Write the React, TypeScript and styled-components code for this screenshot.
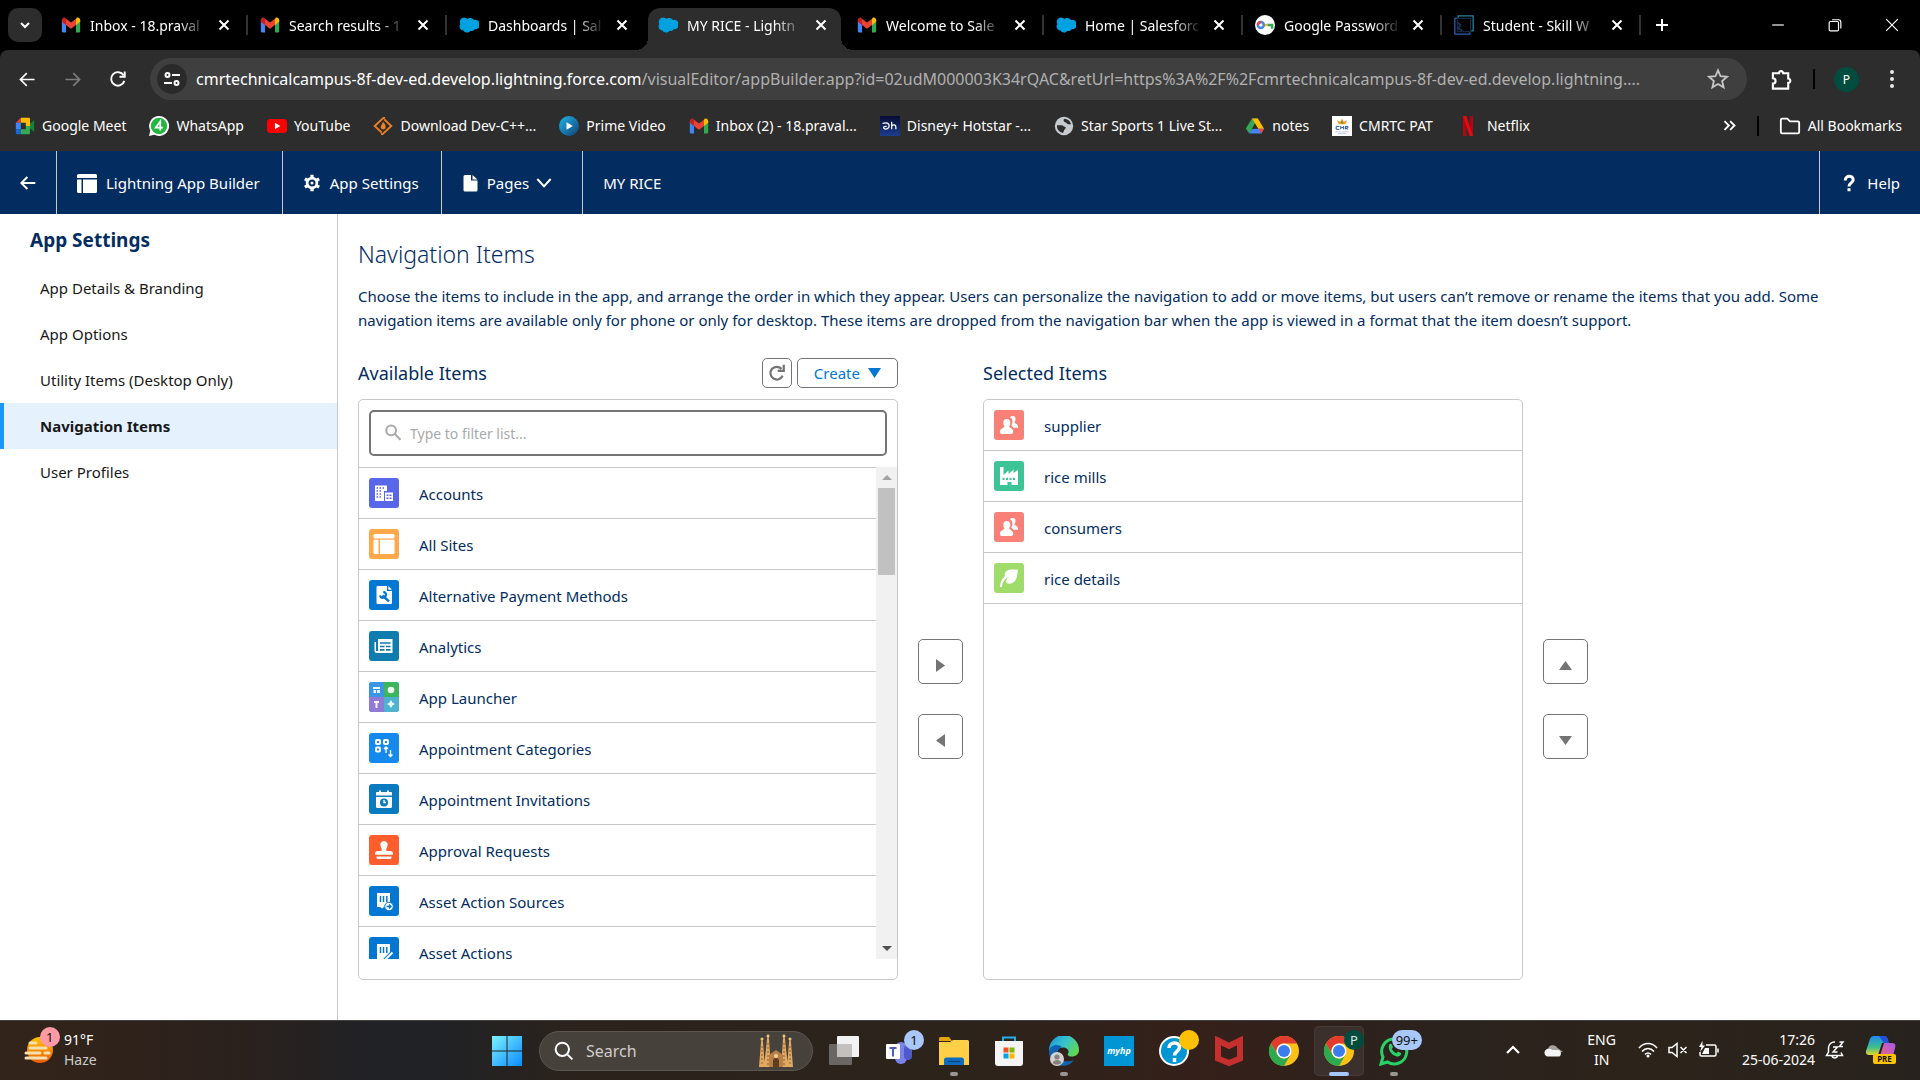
import React from "react";
import styled, { createGlobalStyle, css } from "styled-components";

const FONT = '"Noto Sans", "Open Sans", sans-serif';

const GlobalStyle = createGlobalStyle`
  *, *::before, *::after { box-sizing: border-box; }
  html, body { margin: 0; padding: 0; background: #fff; }
  body { font-family: ${FONT}; font-size: 15px; overflow: hidden; }
  button, input { font: inherit; color: inherit; }
  button { border: 0; padding: 0; background: none; cursor: pointer; }
  a { color: inherit; text-decoration: none; }
  h1, h2, p, ul { margin: 0; padding: 0; font-weight: 400; }
  ul { list-style: none; }
  svg { display: block; flex: none; }
`;

/* ---------- Shell ---------- */

const Shell = styled.div`
  display: flex;
  flex-direction: column;
  height: 100vh;
`;

/* ---------- Browser chrome ---------- */

const TabStrip = styled.div`
  display: flex;
  align-items: stretch;
  height: 50px;
  padding-left: 8px;
  background: #000;
  color: #fff;
  font-size: 14px;
`;

const TabSearch = styled.button`
  display: grid;
  place-items: center;
  flex: none;
  align-self: center;
  width: 34px;
  height: 34px;
  margin-right: 7px;
  border-radius: 10px;
  background: #2d2d2d;
`;

const Tab = styled.div<{ $active?: boolean; $divider?: boolean }>`
  position: relative;
  display: flex;
  align-items: center;
  flex: 0 1 199px;
  min-width: 0;
  padding: 0 18px 0 12px;

  > * { position: relative; }

  ${(p) =>
    p.$divider &&
    css`
      &::after {
        content: "";
        position: absolute;
        right: 0;
        top: 15px;
        width: 2px;
        height: 20px;
        background: #333;
      }
    `}

  ${(p) =>
    p.$active &&
    css`
      &::before {
        content: "";
        position: absolute;
        inset: 8px 4px 0 2px;
        border-radius: 12px 12px 0 0;
        background: #2d2d2d;
      }
      &::after {
        content: "";
        position: absolute;
        bottom: 0;
        left: -10px;
        right: -8px;
        height: 12px;
        background:
          radial-gradient(circle at 0 0, transparent 12px, #2d2d2d 12px) left / 12px 12px no-repeat,
          radial-gradient(circle at 100% 0, transparent 12px, #2d2d2d 12px) right / 12px 12px no-repeat;
      }
    `}
`;

const TabTitle = styled.span`
  flex: 1;
  min-width: 0;
  margin: 0 6px 0 9px;
  overflow: hidden;
  white-space: nowrap;
  mask-image: linear-gradient(90deg, #000 72%, transparent 96%);
`;

const ChromeButton = styled.button<{ $w?: number }>`
  display: grid;
  place-items: center;
  flex: none;
  width: ${(p) => p.$w ?? 45}px;
  height: 100%;
  color: #fff;
`;

const WindowControls = styled.div`
  display: flex;
  margin-left: auto;
`;

const ChromeBody = styled.div`
  background: #000;
  color: #e8e8e8;
`;

const Toolbar = styled.div`
  display: flex;
  align-items: center;
  height: 58px;
  padding: 0 6px 0 5px;
  border-radius: 8px 8px 0 0;
  background: #2d2d2d;
`;

const Omnibox = styled.div`
  display: flex;
  align-items: center;
  flex: 1;
  min-width: 0;
  height: 42px;
  margin: 0 12px 0 10px;
  padding: 0 18px 0 7px;
  border-radius: 21px;
  background: #3f3f3f;
  color: #c7c7c7;
`;

const SiteInfo = styled.button`
  display: grid;
  place-items: center;
  flex: none;
  width: 30px;
  height: 30px;
  border-radius: 50%;
  background: #2a2a2a;
`;

const Url = styled.div`
  flex: 1;
  min-width: 0;
  padding: 0 9px;
  overflow: hidden;
  white-space: nowrap;
  font-size: 16px;
  color: #b0b0b0;

  b { font-weight: 400; color: #fff; }
`;

const VRule = styled.span<{ $m: string }>`
  flex: none;
  width: 2px;
  height: 20px;
  margin: ${(p) => p.$m};
  background: #000;
`;

const Avatar = styled.span`
  display: grid;
  place-items: center;
  width: 25px;
  height: 25px;
  border-radius: 50%;
  background: #004d40;
  color: #fff;
  font-size: 12px;
`;

const BookmarkBar = styled.nav`
  display: flex;
  align-items: center;
  height: 43px;
  padding: 0 18px 8px 15px;
  background: #2d2d2d;
  color: #fff;
  font-size: 14px;
`;

const BookmarkList = styled.div`
  display: flex;
  align-items: center;
  flex: 1;
  gap: 23px;
  min-width: 0;
`;

const Bookmark = styled.a`
  display: flex;
  align-items: center;
  gap: 7px;
  white-space: nowrap;
`;

/* ---------- App header ---------- */

const AppHeader = styled.header`
  display: flex;
  flex: none;
  height: 63px;
  background: #032d60;
  color: #fff;
`;

const HeaderItem = styled.button<{ $pr?: number; $gap?: number; $side?: "left" | "right" | "none" }>`
  display: flex;
  align-items: center;
  gap: ${(p) => p.$gap ?? 9}px;
  padding: 0 ${(p) => p.$pr ?? 20}px 0 20px;
  white-space: nowrap;
  ${(p) => p.$side !== "left" && p.$side !== "none" && "border-right: 1px solid #c9c9c9;"}
  ${(p) => p.$side === "left" && "border-left: 1px solid #c9c9c9; margin-left: auto;"}
`;

/* ---------- Body ---------- */

const Body = styled.div`
  display: flex;
  flex: 1;
  min-height: 0;
  color: #032d60;
`;

const Sidebar = styled.nav`
  flex: none;
  width: 338px;
  padding-top: 10px;
  border-right: 1px solid #c9c9c9;
`;

const SidebarTitle = styled.h2`
  padding: 0 30px;
  margin-bottom: 9px;
  font-size: 19px;
  line-height: 32px;
  font-weight: 700;
`;

const SideLink = styled.a<{ $active?: boolean }>`
  display: flex;
  align-items: center;
  height: 46px;
  padding: 0 0 0 36px;
  border-left: 4px solid transparent;
  color: #181818;
  ${(p) =>
    p.$active &&
    css`
      border-left-color: #1b96ff;
      background: #e5f2fd;
      font-weight: 700;
    `}
`;

const Main = styled.main`
  display: flex;
  flex-direction: column;
  flex: 1;
  min-width: 0;
  padding: 20px 20px 40px;
`;

const PageTitle = styled.h1`
  font-size: 23px;
  line-height: 40px;
  font-weight: 300;
`;

const Intro = styled.p`
  margin: 10px 30px 26px 0;
  line-height: 24px;
`;

const Picker = styled.div`
  display: flex;
  flex: 1;
  gap: 20px;
  min-height: 0;
`;

const Panel = styled.section`
  display: flex;
  flex-direction: column;
  flex: 0 1 540px;
  min-width: 0;
`;

const PanelHead = styled.div`
  display: flex;
  align-items: center;
  gap: 5px;
  flex: none;
  height: 30px;
  margin-bottom: 11px;

  h2 { flex: 1; font-size: 18px; }
`;

const OutlineButton = styled.button<{ $px: number }>`
  display: flex;
  align-items: center;
  gap: 8px;
  height: 30px;
  padding: 0 ${(p) => p.$px}px;
  border: 1px solid #747474;
  border-radius: 5px;
  color: #0176d3;
`;

const Box = styled.div`
  display: flex;
  flex-direction: column;
  flex: 1;
  min-height: 0;
  border: 1px solid #c9c9c9;
  border-radius: 5px;
`;

const Filter = styled.label`
  display: flex;
  align-items: center;
  gap: 8px;
  flex: none;
  height: 46px;
  margin: 10px 10px 11px;
  padding: 0 13px;
  border: 2px solid #747474;
  border-radius: 5px;

  input {
    flex: 1;
    min-width: 0;
    padding: 0;
    border: 0;
    outline: 0;
    background: none;
    font-size: 14px;
  }
  input::placeholder { color: #aaa; opacity: 1; }
`;

const ScrollArea = styled.div`
  display: flex;
  flex: 1;
  min-height: 0;
  margin-bottom: 20px;
`;

const ItemList = styled.ul<{ $top?: boolean }>`
  flex: 1;
  min-width: 0;
  overflow: hidden;
  ${(p) => p.$top && "border-top: 1px solid #c9c9c9;"}
`;

const Item = styled.li`
  display: flex;
  align-items: center;
  gap: 20px;
  height: 51px;
  padding: 0 10px;
  border-bottom: 1px solid #c9c9c9;

  span { padding-top: 1px; }
`;

const Tile = styled.svg<{ $bg: string }>`
  width: 30px;
  height: 30px;
  border-radius: 3px;
  background: ${(p) => p.$bg};
`;

const ScrollTrack = styled.div`
  display: flex;
  flex-direction: column;
  align-items: center;
  flex: none;
  width: 21px;
  background: #f1f1f1;
`;

const ScrollArrow = styled.button`
  display: grid;
  place-items: center;
  flex: none;
  width: 100%;
  height: 21px;
`;

const ScrollThumb = styled.div`
  width: 17px;
  height: 87px;
  margin-bottom: auto;
  background: #c1c1c1;
`;

const Movers = styled.div`
  display: flex;
  flex-direction: column;
  justify-content: center;
  gap: 30px;
  padding-top: 60px;
`;

const Mover = styled.button`
  display: grid;
  place-items: center;
  width: 45px;
  height: 45px;
  padding-top: 8px;
  border: 1px solid #747474;
  border-radius: 5px;
`;

/* ---------- Taskbar ---------- */

const Taskbar = styled.footer`
  display: grid;
  grid-template-columns: 1fr auto 1fr;
  align-items: center;
  flex: none;
  height: 60px;
  border-top: 1px solid #45433f;
  background: linear-gradient(90deg, #33241a 0, #2b211c 12%, #202226 20%, #212225 23%, #2b221c 30%, #2c231b 50%, #35201a 63%, #2a221d 75%, #2c241a 85%, #28221e 100%);
  color: #fff;
`;

const Weather = styled.button`
  position: relative;
  display: flex;
  align-items: center;
  gap: 8px;
  justify-self: start;
  padding: 0 0 2px 24px;
  text-align: left;
  font-size: 14px;
  line-height: 20px;

  em { display: block; font-style: normal; color: #ccc; }
`;

const Dock = styled.div`
  display: flex;
  align-items: center;
  height: 59px;
  margin-right: 14px;
`;

const DockItem = styled.button<{ $active?: boolean; $w?: number }>`
  position: relative;
  display: grid;
  place-items: center;
  flex: none;
  width: ${(p) => p.$w ?? 50}px;
  height: 50px;
  margin-right: 5px;
  border-radius: 5px;
  ${(p) =>
    p.$active &&
    css`
      background: #3b302b;
      box-shadow: inset 0 0 0 1px #463b36;
    `}
`;

const RunMark = styled.span<{ $active?: boolean }>`
  position: absolute;
  bottom: 0;
  left: 50%;
  width: ${(p) => (p.$active ? 20 : 8)}px;
  height: 4px;
  border-radius: 2px;
  transform: translateX(-50%);
  background: ${(p) => (p.$active ? "#a8c7fa" : "#9a9592")};
`;

const Badge = styled.span<{ $bg: string; $fg?: string; $top?: number; $right?: number }>`
  position: absolute;
  top: ${(p) => p.$top ?? 4}px;
  right: ${(p) => p.$right ?? 0}px;
  min-width: 20px;
  height: 20px;
  padding: 0 4px;
  border-radius: 10px;
  background: ${(p) => p.$bg};
  color: ${(p) => p.$fg ?? "#111"};
  font-size: 13px;
  line-height: 20px;
  text-align: center;
`;

const TaskSearch = styled.label`
  display: flex;
  align-items: center;
  width: 274px;
  height: 40px;
  margin: 0 6px 0 2px;
  padding: 0 18px 0 14px;
  border: 1px solid #5c5650;
  border-radius: 20px;
  background: #47413b;

  input {
    flex: 1;
    min-width: 0;
    margin-left: 12px;
    padding: 0;
    border: 0;
    outline: 0;
    background: none;
    font-size: 16px;
  }
  input::placeholder { color: #d0cdca; opacity: 1; }
`;

const MyHp = styled.span`
  display: grid;
  place-items: center;
  width: 30px;
  height: 30px;
  background: #0096d6;
  font-size: 9px;
  font-style: italic;
  font-weight: 700;
`;

const Tray = styled.div`
  display: flex;
  align-items: center;
  justify-self: end;
  padding: 0 24px 2px 0;
  font-size: 14px;
  line-height: 20px;
`;

const TrayGroup = styled.button<{ $ml: number; $align?: string }>`
  display: flex;
  align-items: center;
  gap: 10px;
  margin-left: ${(p) => p.$ml}px;
  text-align: ${(p) => p.$align ?? "center"};
`;

/* ---------- Icons ---------- */

type IconProps = { size?: number };

const Line = ({ d, size = 20, w = 2, color = "currentColor" }: { d: string; size?: number; w?: number; color?: string }) => (
  <svg width={size} height={size} viewBox="0 0 24 24" fill="none" stroke={color} strokeWidth={w}>
    <path d={d} />
  </svg>
);

const Gmail = ({ size = 20 }: IconProps) => (
  <svg width={size} height={size} viewBox="0 0 24 24">
    <path d="M1 6v13.5c0 .8.7 1.5 1.5 1.5H6V10z" fill="#4285f4" />
    <path d="M23 6v13.5c0 .8-.7 1.5-1.5 1.5H18V10z" fill="#34a853" />
    <path d="M18 5v7l5-3.800V6c0-2.500-2.700-3.700-4.500-2.400z" fill="#fbbc04" />
    <path d="M6 5v7L1 8.200V6c0-2.500 2.700-3.700 4.500-2.400z" fill="#c5221f" />
    <path d="M6 12V4.500l6 4.600 6-4.600V12l-6 4.500z" fill="#ea4335" />
  </svg>
);

const Salesforce = () => (
  <svg width="20" height="20" viewBox="0 0 24 24">
    <path d="M10 5.800a4.800 4.800 0 0 1 7.600 1 5 5 0 1 1 .900 9.600 4 4 0 0 1-5 1.700 4.300 4.300 0 0 1-7.800-.400A4 4 0 0 1 2.500 11 4.300 4.300 0 0 1 10 5.800z" fill="#00a1e0" stroke="#00a1e0" strokeWidth="1.500" />
  </svg>
);

const PasswordKey = () => (
  <svg width="20" height="20" viewBox="0 0 24 24">
    <circle cx="12" cy="12" r="12" fill="#fff" />
    <path d="M10 12h5" stroke="#fbbc04" strokeWidth="3" />
    <path d="M15 10.500h7v6h-3v-3h-4z" fill="#34a853" />
    <circle cx="7" cy="12" r="3.500" fill="none" stroke="#4285f4" strokeWidth="3" />
    <path d="M3.500 12A3.500 3.500 0 0 1 7 8.500" fill="none" stroke="#ea4335" strokeWidth="3" />
  </svg>
);

const SkillWallet = () => (
  <svg width="20" height="20" viewBox="0 0 24 24" fill="none" strokeWidth="1.500">
    <path d="M5 4V1h18v18h-3" stroke="#2a7f9e" />
    <path d="M4 4H1v19h18v-3" stroke="#2f5fb0" />
    <path d="M4 4h16v16H4z" stroke="#14283f" />
    <path d="M4 9l4 3-3 4 5 3" stroke="#17335e" strokeWidth="2" />
  </svg>
);

const Meet = () => (
  <svg width="20" height="20" viewBox="0 0 24 24">
    <path d="M1 8l6-6v6z" fill="#ea4335" />
    <path d="M7 2h9.500c1 0 1.500.600 1.500 1.500V12h-5V8H7z" fill="#fbbc04" />
    <path d="M1 8h6v8H1z" fill="#4285f4" />
    <path d="M1 16h6v6H2.500C1.600 22 1 21.400 1 20.500z" fill="#1967d2" />
    <path d="M7 16h6v-4h5v8.500c0 .900-.600 1.500-1.500 1.500H7z" fill="#34a853" />
    <path d="M18 9l5-4v14l-5-4z" fill="#188038" />
  </svg>
);

const WhatsAppBadge = () => (
  <svg width="20" height="20" viewBox="0 0 24 24">
    <path d="M12 0a12 12 0 1 1-5.500 22.600L0 24l1.500-6.300A12 12 0 0 1 12 0z" fill="#fff" />
    <circle cx="12" cy="12" r="9.800" fill="#25b543" />
    <path d="M13.500 17.500V6.500L8 14h8.500" fill="none" stroke="#fff" strokeWidth="2" />
  </svg>
);

const YouTube = () => (
  <svg width="20" height="20" viewBox="0 0 24 24">
    <rect y="3.500" width="24" height="17" rx="4" fill="#f00" />
    <path d="M9.500 8l6.500 4-6.500 4z" fill="#fff" />
  </svg>
);

const SourceForge = () => (
  <svg width="20" height="20" viewBox="0 0 24 24" fill="none" stroke="#f08024" strokeWidth="2.200">
    <path d="M10.500 20L2 12 12.500 2.200h2" />
    <path d="M13.500 4L22 12 11.500 21.800h-2" />
    <path d="M12 7c3 3 3.500 5 3 7.500-.500 2-4.500 2.500-5.500 0S11 10.500 12 7z" fill="#f08024" stroke="none" />
  </svg>
);

const Prime = () => (
  <svg width="20" height="20" viewBox="0 0 24 24">
    <defs>
      <linearGradient id="prime" x1="0" y1="0" x2="1" y2="1">
        <stop offset="0" stopColor="#1fb6e8" />
        <stop offset="1" stopColor="#123f77" />
      </linearGradient>
    </defs>
    <circle cx="12" cy="12" r="12" fill="url(#prime)" />
    <path d="M9 7.500l7.500 4.500L9 16.500z" fill="#fff" />
  </svg>
);

const Hotstar = () => (
  <svg width="20" height="20" viewBox="0 0 24 24">
    <defs>
      <linearGradient id="hot" x1="0" y1="0" x2="0" y2="1">
        <stop offset="0" stopColor="#070b33" />
        <stop offset="1" stopColor="#1d3d90" />
      </linearGradient>
    </defs>
    <rect width="24" height="24" fill="url(#hot)" />
    <path d="M3 9c5-2 8 0 8 3s-4 4.500-6 3 1-3 3-2.500M14 7v9M14 12c2-2 5-2 5 1v3" fill="none" stroke="#fff" strokeWidth="1.500" />
  </svg>
);

const Globe = () => (
  <svg width="20" height="20" viewBox="0 0 24 24">
    <circle cx="12" cy="12" r="11" fill="#c7cacf" />
    <path d="M3.500 11h6c1.500 0 2 2 3.500 2s1.500 2 0 3-1 3.500-2.500 4.500A9 9 0 0 1 3.500 11zM12 3.200c-1 2-.500 3.800 1.500 4.300s2 2.500 4 2.500h3A9 9 0 0 0 12 3.200z" fill="#2d2d2d" />
  </svg>
);

const Drive = () => (
  <svg width="20" height="20" viewBox="0 0 24 24">
    <path d="M8.500 3h7L8.500 15.200 5 21l-4-6z" fill="#34a853" />
    <path d="M8.500 3h7l7.500 12.500h-7z" fill="#fbbc04" />
    <path d="M8.500 15.200H23L19.500 21H5z" fill="#4285f4" />
    <path d="M8.500 15.200L12 9.200l3.500 6z" fill="#2d2d2d" />
    <path d="M16 15.200h7L19.500 21z" fill="#ea4335" />
  </svg>
);

const Cmr = () => (
  <svg width="20" height="20" viewBox="0 0 24 24">
    <rect width="24" height="24" fill="#fff" />
    <path d="M12 3l2 4 4-2-2 5H8L6 5l4 2z" fill="#f29a1f" />
    <path d="M12 5l1.500 4h-3z" fill="#3e9a4a" />
    <path d="M5 12.500h4M5 12.500v3.500h4M10.500 16v-3.500l1.700 2 1.700-2V16M16 16v-3.500h3v2h-3l3 1.500" fill="none" stroke="#2e5a9a" strokeWidth="1.200" />
    <path d="M4 19h16M7 21h10" stroke="#b9c6d8" />
  </svg>
);

const Netflix = () => (
  <svg width="24" height="20" viewBox="0 0 28 24">
    <path d="M8 0h4v24H8zM16 0h4v24h-4z" fill="#b1060f" />
    <path d="M8 0h4l8 24h-4z" fill="#e50914" />
  </svg>
);

const Triangle = ({ dir, w = 12, h = 10, color = "#747474" }: { dir: "up" | "down" | "left" | "right"; w?: number; h?: number; color?: string }) => {
  const shape = { up: "0,10 5,0 10,10", down: "0,0 10,0 5,10", left: "10,0 10,10 0,5", right: "0,0 10,5 0,10" }[dir];
  return (
    <svg width={w} height={h} viewBox="0 0 10 10" preserveAspectRatio="none">
      <polygon points={shape} fill={color} />
    </svg>
  );
};

const glyphs: Record<string, React.ReactNode> = {
  account: (
    <>
      <path d="M6 7.500h12v5.500h-3v10H6zM16 14.500h8V23h-8z" fill="#fff" />
      <path d="M7.500 10h9" stroke="#5867e8" strokeWidth="1.500" strokeDasharray="1.500 1.500" />
      <path d="M7.500 13h6M7.500 16h6M7.500 19h6" stroke="#5867e8" strokeWidth="1.500" strokeDasharray="1.500 1.500" />
      <path d="M17.500 17.200h5M17.500 20.200h5" stroke="#5867e8" strokeWidth="1.500" strokeDasharray="2 1" />
    </>
  ),
  sites: (
    <>
      <rect x="4.500" y="5" width="21" height="4.500" rx="1.500" fill="#fff" />
      <path d="M4.500 10.800h5V25H6a1.500 1.500 0 0 1-1.500-1.500zM11 10.800h14.500v12.700A1.500 1.500 0 0 1 24 25H11z" fill="#fff" />
    </>
  ),
  payment: (
    <>
      <path d="M8.500 6H18v5h5v12a1 1 0 0 1-1 1H8.500a1 1 0 0 1-1-1V7a1 1 0 0 1 1-1zM19.300 6l3.700 3.700h-3.700z" fill="#fff" />
      <path d="M13.500 15.500l6.500 5.800" stroke="#0176d3" strokeWidth="2.400" />
      <path d="M14.300 11.800a3 3 0 1 1-3.300 3.700" fill="none" stroke="#0176d3" strokeWidth="2.200" />
    </>
  ),
  analytics: (
    <>
      <path d="M9 8h14.500v14H8a2.500 2.500 0 0 1-2.500-2.500V11H7v9h2z" fill="#fff" />
      <path d="M11 12h10.500M11 15.500h4.500M17 15.500h4.500M11 18.800h4.500M17 18.800h4.500" stroke="#107cad" strokeWidth="1.700" />
    </>
  ),
  launcher: (
    <>
      <path d="M0 0h15v15H0z" fill="#3b97e3" />
      <path d="M15 0h15v15H15z" fill="#3cb55c" />
      <path d="M0 15h15v15H0z" fill="#9179d6" />
      <path d="M15 15h15v15H15z" fill="#4fb3d0" />
      <path d="M4 5h7v2H4zM4.500 8h2.500v3H4.500zM8 8h3v3H8zM5 19h5v2H8.500v5h-2v-5H5zM22 18l1.500 2.500L26 22l-2.500 1.500L22 26l-1.500-2.500L18 22l2.500-1.500z" fill="#fff" fillOpacity=".9" />
      <circle cx="22" cy="8" r="3.300" fill="#fff" fillOpacity=".9" />
    </>
  ),
  categories: (
    <>
      <g fill="none" stroke="#fff" strokeWidth="2">
        <rect x="7" y="7" width="4" height="4" rx="1" />
        <rect x="15" y="7" width="4" height="4" rx="1" />
        <rect x="7" y="14.500" width="4" height="4" rx="1" />
      </g>
      <path d="M17 20v-6m-2 2l2-2 2 2M21.500 17v6.500m-2-2l2 2 2-2" fill="none" stroke="#fff" strokeWidth="1.400" />
    </>
  ),
  invitations: (
    <>
      <path d="M10 6.500h2V8h6V6.500h2V8h2a1 1 0 0 1 1 1v2.500H7V9a1 1 0 0 1 1-1h2zM7 13h16v9.500a1.500 1.500 0 0 1-1.500 1.500h-13A1.500 1.500 0 0 1 7 22.500z" fill="#fff" />
      <circle cx="15" cy="18.500" r="4" fill="#0b7bc0" />
      <path d="M15 16v2.500h2" fill="none" stroke="#fff" strokeWidth="1.400" />
    </>
  ),
  approval: (
    <path d="M15 6a3.700 3.700 0 0 1 3.300 5.400c-1 1.800-1.200 3.200-.800 4.600h4a2.500 2.500 0 0 1 2.500 2.500v1.300H6v-1.300A2.500 2.500 0 0 1 8.500 16h4c.400-1.400.200-2.800-.800-4.600A3.700 3.700 0 0 1 15 6zM7.500 21.500h15v.700c0 1-.600 1.800-1.800 1.800H9.300c-1.200 0-1.800-.800-1.800-1.800z" fill="#fff" />
  ),
  source: (
    <>
      <path d="M8 7h13v9l-4 6-2-1-2 1.500-2-1.500L8 21z" fill="#fff" />
      <path d="M11.500 10v6M14.500 10v6M17.800 10v6" stroke="#0176d3" strokeWidth="1.500" />
      <circle cx="20" cy="20.500" r="4.300" fill="#fff" stroke="#0176d3" />
      <path d="M17.500 20.500h4.500m-2-2l2 2-2 2" fill="none" stroke="#0176d3" strokeWidth="1.400" />
    </>
  ),
  action: (
    <>
      <path d="M8 7h13v10l-4 6-9-1z" fill="#fff" />
      <path d="M11.500 10v6M14.500 10v6M17.800 10v6" stroke="#0176d3" strokeWidth="1.500" />
      <path d="M15 24l8-8" stroke="#0176d3" strokeWidth="4" />
      <path d="M15.500 23.500l8-8" stroke="#fff" strokeWidth="2" />
    </>
  ),
  people: (
    <>
      <path d="M18.500 6a3 3 0 0 1 3 3.300c0 1.500-.600 2.400-1 3 0 1.400 3.500 1.600 3.500 4.200v1.200h-4.500c-.600-1-2-1.500-2-2.200 0-1 1-2 1-4.300 0-2-1-3-2.500-3.700.400-1 1.300-1.500 2.500-1.500z" fill="#fff" />
      <path d="M12.800 9c2.200 0 3.500 1.600 3.500 3.800 0 1.800-.700 2.800-1.200 3.400 0 1.800 4.100 2 4.100 5.300 0 1.500-.700 2.500-1.700 2.500H7.500C6.500 24 6 23 6 21.500c0-3.300 4.500-3.500 4.500-5.300-.600-.600-1.200-1.600-1.200-3.400C9.300 10.600 10.600 9 12.800 9z" fill="#fff" />
    </>
  ),
  factory: (
    <>
      <path d="M6 6h3.500v8l5-4.500V13l5-4.500V12L24 9v15h-6.500v-3h-4v3H6z" fill="#fff" />
      <path d="M8.500 17.800h13.500" stroke="#3cc497" strokeWidth="2.300" strokeDasharray="2 1.500" />
    </>
  ),
  leaf: (
    <path d="M6 24c0-4 1.500-8 5-11-1.500-3 2-6.500 6-6.500 3 0 5 .5 7 0-.5 2-.3 5-1.500 8.500-1.200 4-5 6.500-8.500 5.500-1-.3-1.800-1-2-1.800 0-1 1-3 2.500-4.700C10.500 16 8.500 19 8 24z" fill="#fff" />
  ),
};

const ChromeLogo = () => (
  <svg width="30" height="30" viewBox="0 0 30 30">
    <circle cx="15" cy="15" r="15" fill="#fbc116" />
    <path d="M2 7.500A15 15 0 0 1 28 7.500H15a7.500 7.500 0 0 0-6.500 11.300z" fill="#e33b2e" />
    <path d="M2 7.500l6.500 11.300A7.500 7.500 0 0 0 15 22.500c2.500 0 4-.700 6.500-3.700L15 30A15 15 0 0 1 2 7.500z" fill="#2da94f" />
    <circle cx="15" cy="15" r="7.500" fill="#fff" />
    <circle cx="15" cy="15" r="6" fill="#3b7ded" />
  </svg>
);

const Edge = () => (
  <svg width="30" height="30" viewBox="0 0 30 30">
    <defs>
      <linearGradient id="edge" x1="0" y1="0" x2="1" y2=".6">
        <stop offset="0" stopColor="#1d8fd8" />
        <stop offset=".5" stopColor="#35c1d0" />
        <stop offset="1" stopColor="#62d94f" />
      </linearGradient>
    </defs>
    <path d="M0 14a15 15 0 0 1 30 0c0 4-3 6.500-7 6.500-3.500 0-5-1.500-4-3 1.500-2 0-6-5-6-6 0-10 6-9 12A15 15 0 0 1 0 14z" fill="url(#edge)" />
    <path d="M0 15c1-6 9-8 13-4-4 1-5 5-4 9 1.500 5 8 7 16 4-5 7-14 7-19 3.500C2 25 0 20 0 15z" fill="#0f63b4" />
    <circle cx="8" cy="23" r="7" fill="#d4d2d0" />
    <circle cx="8" cy="21" r="2.600" fill="#86817e" />
    <path d="M3.500 27c1-4 8-4 9 0a7 7 0 0 1-9 0z" fill="#86817e" />
  </svg>
);

const Cathedral = () => (
  <svg width="36" height="34" viewBox="0 0 36 34">
    <g fill="#e0a860">
      <path d="M1 33L3 8l1-4 1 4 2 25zM6 33L9 5l1-5 1 5 2 28zM23 33l2-28 1-5 1 5 3 28zM29 33l2-25 1-4 1 4 2 25z" />
      <path d="M11 33V21l7-5 7 5v12z" fill="#b98046" />
    </g>
    <path d="M15 33v-6a3 3 0 0 1 6 0v6z" fill="#5d3c20" />
    <circle cx="18" cy="22" r="2" fill="#f3d193" />
    <path d="M4 12v20M10 9v22M26 9v22M32 12v20" stroke="#8f5e2c" strokeDasharray="2 2" />
    <g fill="#f4c57c">
      <circle cx="4" cy="5" r="1.500" />
      <circle cx="10" cy="2" r="1.500" />
      <circle cx="26" cy="2" r="1.500" />
      <circle cx="32" cy="5" r="1.500" />
    </g>
  </svg>
);

/* ---------- Data ---------- */

const tabs = [
  { title: "Inbox - 18.praval", icon: <Gmail />, divider: true },
  { title: "Search results - 1", icon: <Gmail />, divider: true },
  { title: "Dashboards | Sal", icon: <Salesforce /> },
  { title: "MY RICE - Lightn", icon: <Salesforce />, active: true },
  { title: "Welcome to Sale", icon: <Gmail />, divider: true },
  { title: "Home | Salesforc", icon: <Salesforce />, divider: true },
  { title: "Google Password", icon: <PasswordKey />, divider: true },
  { title: "Student - Skill W", icon: <SkillWallet />, divider: true },
];

const bookmarks = [
  { label: "Google Meet", icon: <Meet /> },
  { label: "WhatsApp", icon: <WhatsAppBadge /> },
  { label: "YouTube", icon: <YouTube /> },
  { label: "Download Dev-C++...", icon: <SourceForge /> },
  { label: "Prime Video", icon: <Prime /> },
  { label: "Inbox (2) - 18.praval...", icon: <Gmail /> },
  { label: "Disney+ Hotstar -...", icon: <Hotstar /> },
  { label: "Star Sports 1 Live St...", icon: <Globe /> },
  { label: "notes", icon: <Drive /> },
  { label: "CMRTC PAT", icon: <Cmr /> },
  { label: "Netflix", icon: <Netflix /> },
];

const sections = ["App Details & Branding", "App Options", "Utility Items (Desktop Only)", "Navigation Items", "User Profiles"];

const available = [
  { label: "Accounts", bg: "#5867e8", glyph: "account" },
  { label: "All Sites", bg: "#ffa94c", glyph: "sites" },
  { label: "Alternative Payment Methods", bg: "#0176d3", glyph: "payment" },
  { label: "Analytics", bg: "#107cad", glyph: "analytics" },
  { label: "App Launcher", bg: "#3b97e3", glyph: "launcher" },
  { label: "Appointment Categories", bg: "#1589ee", glyph: "categories" },
  { label: "Appointment Invitations", bg: "#0b7bc0", glyph: "invitations" },
  { label: "Approval Requests", bg: "#ff5d2d", glyph: "approval" },
  { label: "Asset Action Sources", bg: "#0176d3", glyph: "source" },
  { label: "Asset Actions", bg: "#0176d3", glyph: "action" },
];

const selected = [
  { label: "supplier", bg: "#f88077", glyph: "people" },
  { label: "rice mills", bg: "#3cc497", glyph: "factory" },
  { label: "consumers", bg: "#f88077", glyph: "people" },
  { label: "rice details", bg: "#a0dc6a", glyph: "leaf" },
];

const Rows = ({ items, top }: { items: typeof available; top?: boolean }) => (
  <ItemList $top={top}>
    {items.map((it) => (
      <Item key={it.label}>
        <Tile $bg={it.bg} viewBox="0 0 30 30">
          {glyphs[it.glyph]}
        </Tile>
        <span>{it.label}</span>
      </Item>
    ))}
  </ItemList>
);

/* ---------- Page ---------- */

const Browser = () => (
  <>
    <TabStrip>
      <TabSearch aria-label="Search tabs">
        <Line d="M6 9l6 6 6-6" size={16} w={3} />
      </TabSearch>
      {tabs.map((t) => (
        <Tab key={t.title} $active={t.active} $divider={t.divider}>
          {t.icon}
          <TabTitle>{t.title}</TabTitle>
          <ChromeButton $w={12} aria-label="Close tab">
            <Line d="M3 3l18 18M21 3L3 21" size={12} w={4} />
          </ChromeButton>
        </Tab>
      ))}
      <ChromeButton $w={42} aria-label="New tab">
        <Line d="M12 3v18M3 12h18" size={16} w={3} />
      </ChromeButton>
      <WindowControls>
        <ChromeButton $w={57} aria-label="Minimize">
          <Line d="M2 12h20" size={14} />
        </ChromeButton>
        <ChromeButton $w={57} aria-label="Restore">
          <Line d="M2 8a2 2 0 0 1 2-2h12a2 2 0 0 1 2 2v12a2 2 0 0 1-2 2H4a2 2 0 0 1-2-2zM7 3h11a4 4 0 0 1 4 4v11" size={14} />
        </ChromeButton>
        <ChromeButton $w={57} aria-label="Close">
          <Line d="M2 2l20 20M22 2L2 22" size={14} />
        </ChromeButton>
      </WindowControls>
    </TabStrip>
    <ChromeBody>
      <Toolbar>
        <ChromeButton aria-label="Back">
          <Line d="M22 12H3M11 3l-9 9 9 9" size={17} w={2.400} />
        </ChromeButton>
        <ChromeButton aria-label="Forward">
          <Line d="M2 12h19M13 3l9 9-9 9" size={17} w={2.400} color="#7d7d7d" />
        </ChromeButton>
        <ChromeButton aria-label="Reload">
          <Line d="M20.500 14.500a9 9 0 1 1-1-7.500M21 2v7h-7" size={18} w={2.600} />
        </ChromeButton>
        <Omnibox>
          <SiteInfo aria-label="Site information">
            <svg width="16" height="16" viewBox="0 0 16 16" fill="none" stroke="#fff" strokeWidth="2">
              <circle cx="3.500" cy="4" r="2" />
              <path d="M8 4h8M0 12h8" />
              <circle cx="12.500" cy="12" r="2" />
            </svg>
          </SiteInfo>
          <Url role="textbox" aria-label="Address">
            <b>cmrtechnicalcampus-8f-dev-ed.develop.lightning.force.com</b>
            /visualEditor/appBuilder.app?id=02udM000003K34rQAC&amp;retUrl=https%3A%2F%2Fcmrtechnicalcampus-8f-dev-ed.develop.lightning....
          </Url>
          <Line d="M12 2.500l2.800 6.500 7 .600-5.300 4.600 1.600 6.900-6.100-3.700-6.100 3.700 1.600-6.900L2.200 9.600l7-.600z" size={22} />
        </Omnibox>
        <ChromeButton aria-label="Extensions">
          <Line d="M3 5.500h6.300a2.200 2.200 0 1 1 4.400 0H19v5.500a2.200 2.200 0 1 1 0 4.400V21.500H3v-5.200a2.800 2.800 0 0 0 0-5.600z" size={23} w={2.200} />
        </ChromeButton>
        <VRule $m="0 9px" />
        <ChromeButton aria-label="Profile">
          <Avatar>P</Avatar>
        </ChromeButton>
        <ChromeButton aria-label="Menu">
          <svg width="4" height="18" viewBox="0 0 4 18" fill="#e8e8e8">
            <circle cx="2" cy="2" r="2" />
            <circle cx="2" cy="9" r="2" />
            <circle cx="2" cy="16" r="2" />
          </svg>
        </ChromeButton>
      </Toolbar>
      <BookmarkBar>
        <BookmarkList>
          {bookmarks.map((b) => (
            <Bookmark key={b.label} href="#">
              {b.icon}
              {b.label}
            </Bookmark>
          ))}
        </BookmarkList>
        <Line d="M4 5l7 7-7 7M13 5l7 7-7 7" size={15} w={3} />
        <VRule $m="0 20px" />
        <Bookmark href="#">
          <Line d="M2 5.500a1.500 1.500 0 0 1 1.500-1.500H9l3 3h8.500A1.500 1.500 0 0 1 22 8.500v10a1.500 1.500 0 0 1-1.500 1.500h-17A1.500 1.500 0 0 1 2 18.500z" size={22} />
          All Bookmarks
        </Bookmark>
      </BookmarkBar>
    </ChromeBody>
  </>
);

const Header = () => (
  <AppHeader>
    <HeaderItem aria-label="Back">
      <Line d="M23 12H2M11 3l-9 9 9 9" size={16} w={3} />
    </HeaderItem>
    <HeaderItem $pr={22}>
      <svg width="20" height="20" viewBox="0 0 20 20" fill="#fff">
        <path d="M1.500 1h17A1.500 1.500 0 0 1 20 2.500V5H0V2.500A1.500 1.500 0 0 1 1.500 1zM0 6.500h4.500V20h-3A1.500 1.500 0 0 1 0 18.500zM6 6.500h14v12a1.500 1.500 0 0 1-1.500 1.500H6z" />
      </svg>
      Lightning App Builder
    </HeaderItem>
    <HeaderItem $pr={22}>
      <svg width="18" height="18" viewBox="0 0 24 24" fill="none" stroke="#fff">
        <circle cx="12" cy="12" r="6.500" strokeWidth="3.600" />
        <circle cx="12" cy="12" r="2" fill="#fff" stroke="none" />
        <path d="M12 1v4M12 19v4M2.500 6.500l3.500 2M18 15.500l3.500 2M2.500 17.500l3.500-2M18 8.500l3.500-2" strokeWidth="4.400" />
      </svg>
      App Settings
    </HeaderItem>
    <HeaderItem $pr={30} $gap={7}>
      <svg width="18" height="18" viewBox="0 0 18 18" fill="#fff">
        <path d="M3 1h6v5.500h6.500V16a1.500 1.500 0 0 1-1.500 1.500H3A1.500 1.500 0 0 1 1.500 16V2.500A1.500 1.500 0 0 1 3 1zM10.500 1l5 4.500h-5z" />
      </svg>
      Pages
      <Line d="M2 6l10 11L22 6" size={16} w={3} />
    </HeaderItem>
    <HeaderItem $side="none">
      MY RICE
    </HeaderItem>
    <HeaderItem $side="left">
      <Line d="M7 8.500C7 1 18 1.500 17.500 8c-.400 4-5.500 4-5.500 8.500M12 19v4" size={18} w={4} />
      Help
    </HeaderItem>
  </AppHeader>
);

const Content = () => (
  <Body>
    <Sidebar>
      <SidebarTitle>App Settings</SidebarTitle>
      {sections.map((s) => (
        <SideLink key={s} href="#" $active={s === "Navigation Items"}>
          {s}
        </SideLink>
      ))}
    </Sidebar>
    <Main>
      <PageTitle>Navigation Items</PageTitle>
      <Intro>
        Choose the items to include in the app, and arrange the order in which they appear. Users can personalize the navigation to add or move items, but users can’t remove or rename the items that you add. Some navigation items are available only for phone or only for desktop. These items are dropped from the navigation bar when the app is viewed in a format that the item doesn’t support.
      </Intro>
      <Picker>
        <Panel>
          <PanelHead>
            <h2>Available Items</h2>
            <OutlineButton $px={5} aria-label="Refresh">
              <Line d="M19.500 15.500a8.500 8.500 0 1 1-1.500-9M21 1v8h-8" size={18} w={3} color="#747474" />
            </OutlineButton>
            <OutlineButton $px={16}>
              Create
              <Triangle dir="down" w={13} color="#0176d3" />
            </OutlineButton>
          </PanelHead>
          <Box>
            <Filter>
              <Line d="M15 14L22 21M16 8.500a6.500 6.500 0 1 1-13 0 6.500 6.500 0 0 1 13 0z" size={18} w={2.800} color="#aaa" />
              <input type="text" placeholder="Type to filter list..." aria-label="Filter available items" />
            </Filter>
            <ScrollArea>
              <Rows items={available} top />
              <ScrollTrack>
                <ScrollArrow aria-label="Scroll up">
                  <Triangle dir="up" w={10} h={5} color="#a3a3a3" />
                </ScrollArrow>
                <ScrollThumb />
                <ScrollArrow aria-label="Scroll down">
                  <Triangle dir="down" w={10} h={5} color="#505050" />
                </ScrollArrow>
              </ScrollTrack>
            </ScrollArea>
          </Box>
        </Panel>
        <Movers>
          <Mover aria-label="Add to selected">
            <Triangle dir="right" w={9} h={13} />
          </Mover>
          <Mover aria-label="Remove from selected">
            <Triangle dir="left" w={9} h={13} />
          </Mover>
        </Movers>
        <Panel>
          <PanelHead>
            <h2>Selected Items</h2>
          </PanelHead>
          <Box>
            <Rows items={selected} />
          </Box>
        </Panel>
        <Movers>
          <Mover aria-label="Move up">
            <Triangle dir="up" w={13} h={9} />
          </Mover>
          <Mover aria-label="Move down">
            <Triangle dir="down" w={13} h={9} />
          </Mover>
        </Movers>
      </Picker>
    </Main>
  </Body>
);

const Desktop = () => (
  <Taskbar>
    <Weather>
      <svg width="32" height="30" viewBox="0 0 32 30">
        <defs>
          <linearGradient id="sun" x1="0" y1="0" x2="0" y2="1">
            <stop offset="0" stopColor="#ffc400" />
            <stop offset="1" stopColor="#e8590c" />
          </linearGradient>
        </defs>
        <circle cx="16" cy="15" r="13" fill="url(#sun)" />
        <path d="M6 8h6M6 13h16M2 18h14M21 18h4M2 23h20" stroke="#f6dfae" strokeWidth="3" strokeLinecap="round" />
      </svg>
      <Badge $bg="#ff99a4" $top={-3} $right={37}>1</Badge>
      <span>
        91°F
        <em>Haze</em>
      </span>
    </Weather>
    <Dock>
      <DockItem aria-label="Start">
        <svg width="30" height="30" viewBox="0 0 30 30">
          <defs>
            <linearGradient id="win" x1="0" y1="0" x2="1" y2="1">
              <stop offset="0" stopColor="#7df0ff" />
              <stop offset="1" stopColor="#0a8cff" />
            </linearGradient>
          </defs>
          <path d="M0 0h14.500v14.500H0zM15.500 0H30v14.500H15.500zM0 15.500h14.500V30H0zM15.500 15.500H30V30H15.500z" fill="url(#win)" />
        </svg>
      </DockItem>
      <TaskSearch>
        <Line d="M15.500 15.500L22 22M18 10a8 8 0 1 1-16 0 8 8 0 0 1 16 0z" w={2.400} />
        <input type="search" placeholder="Search" aria-label="Search" />
        <Cathedral />
      </TaskSearch>
      <DockItem aria-label="Task view">
        <svg width="30" height="30" viewBox="0 0 30 30">
          <rect y="8" width="23" height="21" rx="1" fill="#696664" />
          <rect x="8" width="22" height="21" rx="1" fill="#f2f2f2" />
          <path d="M8 8h15v13H8z" fill="#c2c1c0" />
        </svg>
      </DockItem>
      <DockItem aria-label="Teams">
        <svg width="28" height="28" viewBox="0 0 28 28">
          <rect x="10" y="5" width="12" height="22" rx="6" fill="#7b83eb" />
          <rect x="19" y="8" width="8" height="15" rx="4" fill="#5059c9" />
          <rect x="1" y="7" width="14" height="15" rx="1" fill="#fff" />
          <path d="M4.500 11h7M8 11v8.500" stroke="#5059c9" strokeWidth="2" />
        </svg>
        <Badge $bg="#a8c7fa">1</Badge>
      </DockItem>
      <DockItem aria-label="File Explorer">
        <svg width="30" height="28" viewBox="0 0 30 28">
          <path d="M0 1.500A1.500 1.500 0 0 1 1.500 0H10l3 4H0z" fill="#e5a50a" />
          <path d="M0 5h11l3-2h14.500A1.500 1.500 0 0 1 30 4.500V28H0z" fill="#ffcf48" />
          <path d="M5 28v-5a2.500 2.500 0 0 1 2.500-2.500h15A2.500 2.500 0 0 1 25 23v5z" fill="#0f6cbd" />
          <path d="M9 24.500h12" stroke="#0b3f78" />
        </svg>
        <RunMark />
      </DockItem>
      <DockItem aria-label="Microsoft Store">
        <svg width="30" height="30" viewBox="0 0 30 30">
          <path d="M9 5V1.500h12V5" fill="none" stroke="#1fb0ee" strokeWidth="2" />
          <path d="M1 5h28v22a3 3 0 0 1-3 3H4a3 3 0 0 1-3-3z" fill="#f4f4f4" />
          <path d="M9.500 11.500h5v5h-5z" fill="#f25022" />
          <path d="M15.500 11.500h5v5h-5z" fill="#7fba00" />
          <path d="M9.500 17.500h5v5h-5z" fill="#00a4ef" />
          <path d="M15.500 17.500h5v5h-5z" fill="#ffb900" />
        </svg>
      </DockItem>
      <DockItem aria-label="Edge">
        <Edge />
        <RunMark />
      </DockItem>
      <DockItem>
        <MyHp>myhp</MyHp>
      </DockItem>
      <DockItem aria-label="HP Support">
        <svg width="30" height="30" viewBox="0 0 30 30">
          <circle cx="15" cy="15" r="14" fill="#0096d6" stroke="#fff" strokeWidth="2" />
          <path d="M10 12c0-7 11-6.500 10.500-.500-.300 4-5 4-5 8M15.500 22v4" fill="none" stroke="#fff" strokeWidth="3.500" />
        </svg>
        <Badge $bg="#ffc107" />
      </DockItem>
      <DockItem aria-label="McAfee">
        <svg width="28" height="30" viewBox="0 0 28 30" fill="none" stroke="#c5302e" strokeWidth="6">
          <path d="M3 4.500L14 10l11-5.500v18L14 27 3 22.500z" />
        </svg>
      </DockItem>
      <DockItem aria-label="Chrome">
        <ChromeLogo />
      </DockItem>
      <DockItem $active aria-label="Chrome profile P">
        <ChromeLogo />
        <Badge $bg="#004d40" $fg="#dfe9e7">P</Badge>
        <RunMark $active />
      </DockItem>
      <DockItem aria-label="WhatsApp">
        <svg width="30" height="30" viewBox="0 0 30 30">
          <path d="M2 28l2-7a12.500 12.500 0 1 1 4.500 5z" fill="none" stroke="#25d366" strokeWidth="3" />
          <path d="M10 9c1-2 2.500-1.500 3 0l1 2.200-1.200 1.800c1 2 2.500 3.200 4.500 4.200l1.700-1.700 3 1.500c.500 3-3 4-5 3.300C12 18.500 9 14 10 9z" fill="#25d366" />
        </svg>
        <Badge $bg="#a8c7fa" $right={-3}>99+</Badge>
        <RunMark />
      </DockItem>
    </Dock>
    <Tray>
      <Line d="M4 16l8-8 8 8" size={18} w={3} />
      <TrayGroup $ml={21} aria-label="OneDrive">
        <svg width="20" height="14" viewBox="0 0 20 14">
          <path d="M5 7a5 5 0 0 1 9.500-2L20 9H3z" fill="#a5a2a0" />
          <path d="M4 13.500a4 4 0 0 1 0-7.500c2-.500 4 0 5.500 1L16 7a4 4 0 0 1 .500 6.500z" fill="#f4f4f4" />
        </svg>
      </TrayGroup>
      <TrayGroup $ml={24}>
        <span>
          ENG
          <br />
          IN
        </span>
      </TrayGroup>
      <TrayGroup $ml={22} aria-label="Network, volume and battery">
        <svg width="20" height="16" viewBox="0 0 20 16" fill="none" stroke="#fff" strokeWidth="1.600">
          <path d="M1 6c5-6 13-6 18 0M4 9.500c3.500-4 8.500-4 12 0M7 12.500c2-2 4-2 6 0" />
          <circle cx="10" cy="14" r="1.500" fill="#fff" stroke="none" />
        </svg>
        <svg width="20" height="16" viewBox="0 0 20 16" fill="none" stroke="#fff" strokeWidth="1.500">
          <path d="M1 5.500h3L9 1.500v13l-5-4H1zM12.500 5l6 6M18.500 5l-6 6" />
        </svg>
        <svg width="22" height="18" viewBox="0 0 22 18" fill="none" stroke="#fff" strokeWidth="1.500">
          <path d="M8 4h8.500A1.500 1.500 0 0 1 18 5.500v8a1.500 1.500 0 0 1-1.500 1.500h-13A1.500 1.500 0 0 1 2 13.500V11M20 7.500v4" />
          <path d="M4.500 0L1 6h2.500L2 11l5-6.500H4.500zM4 13h7V7H7z" fill="#fff" stroke="none" />
        </svg>
      </TrayGroup>
      <TrayGroup $ml={22} $align="right">
        <span>
          17:26
          <br />
          25-06-2024
        </span>
        <svg width="20" height="20" viewBox="0 0 20 20" fill="none" stroke="#fff" strokeWidth="1.500">
          <path d="M10 2a6 6 0 0 0-6.500 6v4L1.500 15.500h16L16 12.500M7 16c.500 2.500 5 2.500 5.500 0M8 7h4.500L8 12h4.500M14.500 2H18l-3.500 4.500H18" />
        </svg>
      </TrayGroup>
      <TrayGroup $ml={21} aria-label="Copilot">
        <svg width="30" height="30" viewBox="0 0 30 30">
          <defs>
            <linearGradient id="copA" x1="0" y1="0" x2="0" y2="1">
              <stop offset="0" stopColor="#1f8af0" />
              <stop offset=".6" stopColor="#3fc08a" />
              <stop offset="1" stopColor="#e8d631" />
            </linearGradient>
            <linearGradient id="copB" x1="1" y1="0" x2="0" y2="1">
              <stop offset="0" stopColor="#a259f0" />
              <stop offset="1" stopColor="#f0637c" />
            </linearGradient>
          </defs>
          <path d="M8 1h10c2 0 3 2 3.500 6L16 8l-4 12H3c-2 0-3.500-1.500-3-4L4 4c.700-2 2-3 4-3z" fill="url(#copA)" />
          <path d="M18 8h8c2.500 0 4 1.500 3.300 4L27 21H14z" fill="url(#copB)" />
          <path d="M13 1h6c2 0 3 2 4 7h-5z" fill="#2350d8" />
          <rect x="7" y="19" width="23" height="10" rx="2" fill="#ffc400" />
          <text x="18.500" y="27" fontSize="8" fontWeight="700" textAnchor="middle" fill="#111">PRE</text>
        </svg>
      </TrayGroup>
    </Tray>
  </Taskbar>
);

export default function App() {
  return (
    <Shell>
      <GlobalStyle />
      <Browser />
      <Header />
      <Content />
      <Desktop />
    </Shell>
  );
}
